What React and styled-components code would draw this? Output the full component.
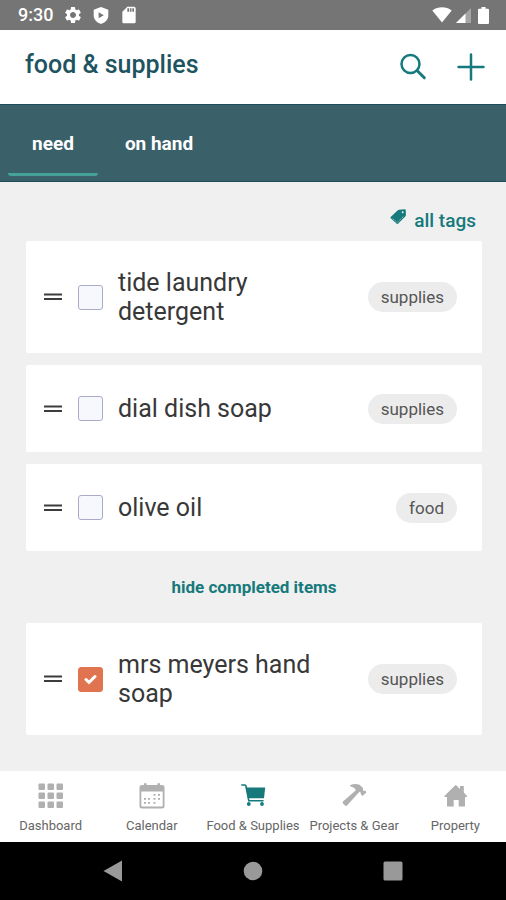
import React, { useState } from 'react';
import styled, { createGlobalStyle } from 'styled-components';
import { MdSettings, MdSdCard } from 'react-icons/md';

const GlobalStyle = createGlobalStyle`
  * {
    box-sizing: border-box;
  }

  body {
    margin: 0;
    font-family: Roboto, sans-serif;
    background: #f0f0f0;
  }

  button {
    padding: 0;
    border: 0;
    background: none;
    font-family: inherit;
    cursor: pointer;
  }

  svg {
    display: block;
  }
`;

const Screen = styled.div`
  display: flex;
  flex-direction: column;
  min-height: 100vh;
`;

const StatusBar = styled.div`
  display: flex;
  align-items: center;
  justify-content: space-between;
  height: 30px;
  padding: 0 17px 0 18px;
  background: #757575;
  color: #fff;
`;

const StatusGroup = styled.div`
  display: flex;
  align-items: center;
  gap: ${(props) => props.$gap}px;
`;

const Clock = styled.span`
  font-size: 18px;
  font-weight: 500;
  line-height: 20px;
`;

const Header = styled.header`
  display: flex;
  align-items: center;
  justify-content: space-between;
  height: 74px;
  padding: 0 21px 0 25px;
  background: #fff;
`;

const Title = styled.h1`
  margin: 0 0 4px;
  color: #1e5460;
  font-size: 25px;
  font-weight: 500;
  line-height: 28px;
`;

const HeaderActions = styled.div`
  display: flex;
  align-items: center;
  gap: 30px;
  color: #167a7c;
`;

const IconButton = styled.button`
  color: inherit;
`;

const Tabs = styled.div`
  display: flex;
  gap: 3px;
  height: 78px;
  padding: 0 8px 5px;
  border-top: 1px solid #1d4b59;
  border-bottom: 1px solid #1d4b59;
  background: #3a606a;
`;

const Tab = styled.button`
  padding: 8px 24px 0;
  border-bottom: 3px solid ${(props) => (props.$active ? '#45a297' : 'transparent')};
  border-radius: 3px;
  color: #fff;
  font-size: 19px;
  font-weight: 700;
`;

const Content = styled.main`
  display: flex;
  flex: 1;
  flex-direction: column;
  padding: 27px 24px 36px 26px;
`;

const TagFilter = styled.button`
  display: flex;
  align-items: flex-start;
  align-self: flex-end;
  gap: 7px;
  margin: 0 6px 8px 0;
  color: #167a7c;
  font-size: 19px;
  font-weight: 500;
  line-height: 24px;
`;

const List = styled.ul`
  display: flex;
  flex-direction: column;
  gap: 12px;
  margin: 0;
  padding: 0;
  list-style: none;
`;

const Card = styled.li`
  display: flex;
  align-items: center;
  min-height: 87px;
  padding: 27px 25px 27px 18px;
  border-radius: 2px;
  background: #fff;
`;

const Handle = styled.button`
  margin-right: 16px;
  color: #3c3c3c;
`;

const CheckWrap = styled.span`
  display: grid;
  flex: none;
  place-items: center;
  margin-right: 15px;

  > * {
    grid-area: 1 / 1;
  }

  svg {
    pointer-events: none;
  }
`;

const Checkbox = styled.input`
  width: 25px;
  height: 25px;
  margin: 0;
  border: 1px solid #a9abc9;
  border-radius: 3px;
  background: #f6f8fd;
  appearance: none;

  &:checked {
    border-color: #e07350;
    background: #e07350;
  }
`;

const ItemName = styled.label`
  flex: 1;
  margin-right: 36px;
  color: #383838;
  font-size: 25px;
  line-height: 29px;
`;

const Pill = styled.span`
  padding: 0 13px;
  border-radius: 15px;
  background: #ececec;
  color: #555;
  font-size: 17px;
  line-height: 30px;
`;

const ToggleCompleted = styled.button`
  align-self: center;
  margin: 25px 0;
  color: #167a7c;
  font-size: 17px;
  font-weight: 700;
  line-height: 22px;
`;

const BottomNav = styled.nav`
  display: grid;
  grid-template-columns: repeat(5, 1fr);
  height: 71px;
  background: #fff;
`;

const NavLink = styled.a`
  display: flex;
  flex-direction: column;
  align-items: center;
  gap: 9px;
  padding-top: 12px;
  color: ${(props) => (props.$active ? '#167a7c' : '#b0b0b0')};
  text-decoration: none;
  white-space: nowrap;
`;

const NavLabel = styled.span`
  color: #666;
  font-size: 13px;
  line-height: 16px;
`;

const SystemNav = styled.div`
  display: flex;
  align-items: center;
  justify-content: center;
  gap: 120px;
  height: 58px;
  background: #000;
  color: #999;
`;

const ShieldIcon = () => (
  <svg width="16" height="17" viewBox="0 0 16 17">
    <path d="M8 0 15.300 2.700v5.800c0 4-3 7.200-7.300 8.400-4.300-1.200-7.300-4.400-7.300-8.400V2.700z" fill="currentColor" />
    <path d="M5.600 5.300v6l5.200-3z" fill="#757575" />
  </svg>
);

const WifiIcon = () => (
  <svg width="20" height="16" viewBox="0 0 20 16">
    <path d="M0.300 3.500C6-.8 14-.8 19.700 3.500L10 15.500z" fill="currentColor" />
  </svg>
);

const SignalIcon = () => (
  <svg width="15" height="15" viewBox="0 0 15 15">
    <path d="M15 0v15H0z" fill="#a5a5a5" />
    <path d="M9.500 5.500V15H0z" fill="currentColor" />
  </svg>
);

const BatteryIcon = () => (
  <svg width="14" height="17" viewBox="-3 0 14 17">
    <path d="M3.500 0h4v1.800H10q1 0 1 1V16q0 1-1 1H1q-1 0-1-1V2.800q0-1 1-1h2.500z" fill="currentColor" />
  </svg>
);

const SearchIcon = () => (
  <svg width="28" height="28" viewBox="0 0 28 28" fill="none" stroke="currentColor">
    <circle cx="11.500" cy="11" r="9" strokeWidth="2.500" />
    <path d="M18 17.500 25.300 24.800" strokeWidth="3" strokeLinecap="round" />
  </svg>
);

const PlusIcon = () => (
  <svg width="28" height="28" viewBox="0 0 28 28" stroke="currentColor" strokeWidth="2.500" strokeLinecap="round">
    <path d="M14 1.500v25M1.500 14h25" />
  </svg>
);

const TagIcon = () => (
  <svg width="17" height="16" viewBox="0 0 17 16">
    <path
      d="M9 .7 14.500.3q1.200 0 1.300 1.200L15.900 6q0 .8-.6 1.400L8 14.700q-.6.5-1.200 0L.7 9.200q-.6-.6 0-1.200L7.800 1.300Q8.300.8 9 .7z"
      fill="currentColor"
    />
    <circle cx="12.700" cy="3.300" r="1" fill="#f0f0f0" />
    <path d="M2.800 9.800 7.200 13.500 14 7" fill="none" stroke="#f0f0f0" strokeWidth=".6" strokeDasharray="1.500 1" />
  </svg>
);

const HandleIcon = () => (
  <svg width="18" height="8" viewBox="0 0 18 8" stroke="currentColor" strokeWidth="1.800">
    <path d="M0 1.500h18M0 6h18" />
  </svg>
);

const CheckIcon = () => (
  <svg width="13" height="11" viewBox="0 0 13 11" fill="none" stroke="#fff" strokeWidth="3" strokeLinecap="round">
    <path d="M2 5.500 5 8.500 11 2.500" />
  </svg>
);

const GridIcon = () => (
  <svg width="26" height="26" viewBox="0 0 26 26" fill="currentColor">
    {[0, 9, 18].map((y) =>
      [0, 9, 18].map((x) => <rect key={`${x}-${y}`} x={x + 0.5} y={y + 0.5} width="6.500" height="6.500" rx="1" />)
    )}
  </svg>
);

const CalendarIcon = () => (
  <svg width="26" height="26" viewBox="0 0 26 26" fill="currentColor">
    <path
      d="M3 2h2V.3h2.500V2h11V.3H21V2h2q2.500 0 2.500 2.500v18.500q0 2.500-2.500 2.500H3Q.5 25.500.5 23V4.500Q.5 2 3 2zM2.300 8.500v14q0 1 1 1h19.400q1 0 1-1v-14z"
      fillRule="evenodd"
    />
    <path d="M14.500 11h2v1.800h-2zM19 11h2v1.800h-2zM5 15h2v1.800H5zM9 15h2v1.800H9zM14.500 15h2v1.800h-2zM19 15h2v1.800h-2zM5 19h2v1.800H5zM9 19h2v1.800H9zM14.500 19h2v1.800h-2z" />
  </svg>
);

const CartIcon = () => (
  <svg width="26" height="26" viewBox="0 0 26 26" fill="currentColor">
    <path d="M5.500 4.500h19.700L24 15.300H8z" />
    <path d="M1.800 2h3q1 0 1.200 1l2.800 14.800H23" fill="none" stroke="currentColor" strokeWidth="1.600" strokeLinecap="round" />
    <circle cx="8.800" cy="21" r="1.900" />
    <circle cx="22" cy="21" r="1.900" />
  </svg>
);

const HammerIcon = () => (
  <svg width="26" height="26" viewBox="0 0 26 26" fill="currentColor">
    <path d="M9.500 2Q14 .2 18.500 1.800L22 5v2.200l1 .8 1-.4 1.500 1.700-4 3.700-1.800-2V9.500l-1.200-.7L6 22.500q-1 .8-2 0l-2-2q-.8-1 0-2L14.800 7.200Q13.500 4 9 3.200 8.600 2.400 9.500 2z" />
  </svg>
);

const HomeIcon = () => (
  <svg width="26" height="26" viewBox="0 0 26 26" fill="currentColor">
    <path d="M13.300 2.200Q13.800 1.800 14.500 2.500L18 6V3h3.800v6.600l3.200 3.300q.8 1.100-.5 1.100H23v9.500h-6.300v-6.500h-5v6.500H5V14H3q-1.300 0-.4-1.200z" />
  </svg>
);

const items = [
  { id: 'tide', name: 'tide laundry detergent', tag: 'supplies' },
  { id: 'dial', name: 'dial dish soap', tag: 'supplies' },
  { id: 'olive', name: 'olive oil', tag: 'food' },
];

const completed = [{ id: 'meyers', name: 'mrs meyers hand soap', tag: 'supplies' }];

const links = [
  { label: 'Dashboard', Icon: GridIcon },
  { label: 'Calendar', Icon: CalendarIcon },
  { label: 'Food & Supplies', Icon: CartIcon, active: true },
  { label: 'Projects & Gear', Icon: HammerIcon },
  { label: 'Property', Icon: HomeIcon },
];

const ListItem = ({ item, done }) => {
  const [checked, setChecked] = useState(Boolean(done));

  return (
    <Card>
      <Handle aria-label={`Move ${item.name}`}>
        <HandleIcon />
      </Handle>
      <CheckWrap>
        <Checkbox id={item.id} type='checkbox' checked={checked} onChange={() => setChecked(!checked)} />
        {checked && <CheckIcon />}
      </CheckWrap>
      <ItemName htmlFor={item.id}>{item.name}</ItemName>
      <Pill>{item.tag}</Pill>
    </Card>
  );
};

export default function App() {
  const [tab, setTab] = useState('need');
  const [showCompleted, setShowCompleted] = useState(true);

  return (
    <>
      <GlobalStyle />
      <Screen>
        <StatusBar>
          <StatusGroup $gap={10}>
            <Clock>9:30</Clock>
            <MdSettings size={20} />
            <ShieldIcon />
            <MdSdCard size={20} />
          </StatusGroup>
          <StatusGroup $gap={4}>
            <WifiIcon />
            <SignalIcon />
            <BatteryIcon />
          </StatusGroup>
        </StatusBar>
        <Header>
          <Title>food &amp; supplies</Title>
          <HeaderActions>
            <IconButton aria-label='Search'>
              <SearchIcon />
            </IconButton>
            <IconButton aria-label='Add item'>
              <PlusIcon />
            </IconButton>
          </HeaderActions>
        </Header>
        <Tabs role='tablist'>
          {['need', 'on hand'].map((name) => (
            <Tab key={name} role='tab' aria-selected={tab === name} $active={tab === name} onClick={() => setTab(name)}>
              {name}
            </Tab>
          ))}
        </Tabs>
        <Content>
          <TagFilter>
            <TagIcon />
            all tags
          </TagFilter>
          <List>
            {items.map((item) => (
              <ListItem key={item.id} item={item} />
            ))}
          </List>
          <ToggleCompleted onClick={() => setShowCompleted(!showCompleted)}>
            {showCompleted ? 'hide' : 'show'} completed items
          </ToggleCompleted>
          {showCompleted && (
            <List>
              {completed.map((item) => (
                <ListItem key={item.id} item={item} done />
              ))}
            </List>
          )}
        </Content>
        <BottomNav>
          {links.map(({ label, Icon, active }) => (
            <NavLink key={label} href='#' $active={active}>
              <Icon />
              <NavLabel>{label}</NavLabel>
            </NavLink>
          ))}
        </BottomNav>
        <SystemNav>
          <IconButton aria-label='Back'>
            <svg width="20" height="22" viewBox="0 0 20 22">
              <path d="M19 .5v21L.5 11z" fill="currentColor" />
            </svg>
          </IconButton>
          <IconButton aria-label='Home'>
            <svg width="20" height="20" viewBox="0 0 20 20">
              <circle cx="10" cy="10" r="9.300" fill="currentColor" />
            </svg>
          </IconButton>
          <IconButton aria-label='Recent apps'>
            <svg width="20" height="20" viewBox="0 0 20 20">
              <rect x=".5" y=".5" width="19" height="19" rx="1.500" fill="currentColor" />
            </svg>
          </IconButton>
        </SystemNav>
      </Screen>
    </>
  );
}
